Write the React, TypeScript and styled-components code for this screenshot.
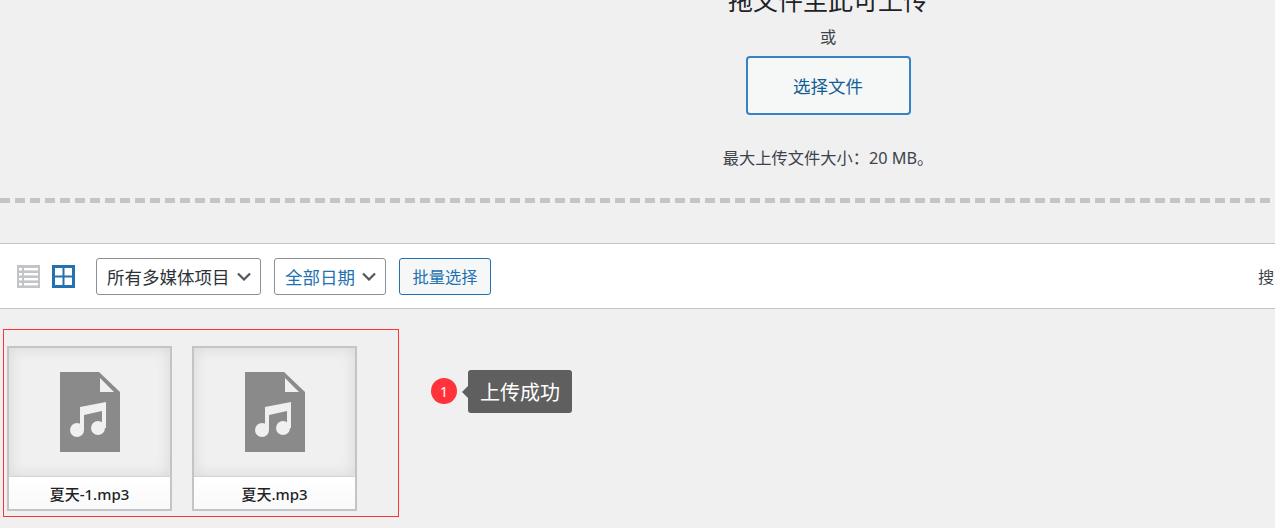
import React from 'react';
import styled, { createGlobalStyle } from 'styled-components';

const GlobalStyle = createGlobalStyle`
  html, body {
    margin: 0;
    padding: 0;
    background: #f0f0f1;
  }
  body {
    font-family: "Noto Sans", "Noto Sans CJK SC", sans-serif;
    color: #3c434a;
  }
`;

const Page = styled.div`
  width: 1275px;
  height: 528px;
  overflow: hidden;
`;

// Upload area
const Uploader = styled.section`
  height: 198px;
  padding-left: 381px;
  display: flex;
  flex-direction: column;
  align-items: center;
`;

const DropTitle = styled.h2`
  margin: -17px 0 0;
  font-size: 25px;
  line-height: 34px;
  font-weight: 400;
  color: #1d2327;
`;

const OrText = styled.p`
  margin: 8px 0 0;
  font-size: 16.25px;
  line-height: 24px;
`;

const PickButton = styled.button`
  width: 165px;
  height: 59px;
  margin-top: 7px;
  padding: 0;
  box-sizing: border-box;
  border: 2px solid #3582c4;
  border-radius: 4px;
  background: #f6f7f7;
  color: #135e96;
  font-family: inherit;
  font-size: 17.5px;
`;

const MaxSize = styled.p`
  margin: 31px 0 0;
  font-size: 16.25px;
  line-height: 24px;
`;

const DashedRule = styled.div`
  height: 5px;
  background: repeating-linear-gradient(to right, #c3c4c7 0 10px, transparent 10px 15px);
`;

// Toolbar
const Toolbar = styled.div`
  margin-top: 40px;
  height: 64px;
  display: flex;
  align-items: center;
  background: #fff;
  border-top: 1px solid #c3c4c7;
  border-bottom: 1px solid #c3c4c7;
  padding-left: 17px;
  white-space: nowrap;
`;

const ViewIcons = styled.div`
  display: flex;
  gap: 12px;
  margin-right: 21px;
`;

const SelectBox = styled.div<{ $width: number; $active?: boolean }>`
  width: ${p => p.$width}px;
  height: 37px;
  box-sizing: border-box;
  margin-right: 13px;
  padding: 0 9px 0 10px;
  display: flex;
  align-items: center;
  justify-content: space-between;
  background: #fff;
  border: 1px solid #8c8f94;
  border-radius: 3px;
  font-size: 17.5px;
  color: ${p => (p.$active ? '#2271b1' : '#2c3338')};
`;

const BulkButton = styled.button`
  width: 92px;
  height: 37px;
  padding: 0;
  box-sizing: border-box;
  border: 1px solid #2271b1;
  border-radius: 3px;
  background: #f6f7f7;
  color: #2271b1;
  font-family: inherit;
  font-size: 16.25px;
`;

const SearchLabel = styled.span`
  margin-left: auto;
  width: 17px;
  overflow: hidden;
  font-size: 16.25px;
  color: #3c434a;
`;

// Attachments row
const Content = styled.div`
  display: flex;
  align-items: center;
  padding: 20px 0 0 3px;
`;

const RedFrame = styled.div`
  width: 396px;
  height: 188px;
  box-sizing: border-box;
  padding: 16px 3px;
  display: flex;
  gap: 20px;
  border: 1px solid #f33;
`;

const Attachment = styled.div`
  width: 165px;
  height: 165px;
  box-sizing: border-box;
  border: 2px solid #c3c4c7;
  display: flex;
  flex-direction: column;
`;

const Thumb = styled.div`
  flex: 1;
  display: flex;
  align-items: center;
  justify-content: center;
  background: #f0f0f1;
  box-shadow: inset 0 0 15px rgba(0, 0, 0, 0.1);
`;

const FileName = styled.div`
  height: 33px;
  box-sizing: border-box;
  display: flex;
  align-items: center;
  justify-content: center;
  background: linear-gradient(#fff, #f9f9f9);
  border-top: 1px solid #d4d4d4;
  font-size: 15px;
  font-weight: 500;
  color: #1d2327;
`;

const Notice = styled.div`
  display: flex;
  align-items: center;
  gap: 11px;
  margin: 0 0 64px 32px;
`;

const StepBadge = styled.span`
  width: 26px;
  height: 26px;
  border-radius: 50%;
  background: #ff3339;
  color: #fff;
  font-size: 14px;
  display: flex;
  align-items: center;
  justify-content: center;
`;

const Tip = styled.div`
  position: relative;
  width: 104px;
  height: 43px;
  display: flex;
  align-items: center;
  justify-content: center;
  background: #5f5f5f;
  border-radius: 3px;
  color: #fff;
  font-size: 20px;

  &::before {
    content: '';
    position: absolute;
    left: -6px;
    top: 16px;
    border-style: solid;
    border-width: 6px 6px 6px 0;
    border-color: transparent #5f5f5f transparent transparent;
  }
`;

const ListViewIcon = () => (
  <svg width="23" height="23" viewBox="0 0 23 23">
    <rect width="23" height="23" fill="#c3c4c7" />
    <g fill="#fff">
      <rect x="2" y="3" width="3" height="2.4" />
      <rect x="7" y="3" width="14" height="2.4" />
      <rect x="2" y="8" width="3" height="2.4" />
      <rect x="7" y="8" width="14" height="2.4" />
      <rect x="2" y="13" width="3" height="2.4" />
      <rect x="7" y="13" width="14" height="2.4" />
      <rect x="2" y="18" width="3" height="2.4" />
      <rect x="7" y="18" width="14" height="2.4" />
    </g>
  </svg>
);

const GridViewIcon = () => (
  <svg width="23" height="23" viewBox="0 0 23 23">
    <rect width="23" height="23" fill="#2271b1" />
    <g fill="#fff">
      <rect x="3" y="3" width="7.5" height="7.5" />
      <rect x="12.5" y="3" width="7.5" height="7.5" />
      <rect x="3" y="12.5" width="7.5" height="7.5" />
      <rect x="12.5" y="12.5" width="7.5" height="7.5" />
    </g>
  </svg>
);

const Chevron = () => (
  <svg width="14" height="9" viewBox="0 0 14 9">
    <path d="M1 1.5 L7 7.5 L13 1.5" fill="none" stroke="#50575e" strokeWidth="2.2" />
  </svg>
);

const AudioIcon = () => (
  <svg width="60" height="80" viewBox="0 0 60 80">
    <path d="M0 0 H39 L60 20 V80 H0 Z" fill="#8a8a8a" />
    <path d="M40 6 L54 20 H40 Z" fill="#f0f0f1" />
    <g fill="#f0f0f1">
      <circle cx="17" cy="58" r="7" />
      <circle cx="38" cy="56" r="7" />
      <path d="M20 58 V35 L46 30 V56 H42 V39 L24 43 V58 Z" />
    </g>
  </svg>
);

const files = ['夏天-1.mp3', '夏天.mp3'];

export default function App() {
  return (
    <Page>
      <GlobalStyle />
      <Uploader>
        <DropTitle>拖文件至此可上传</DropTitle>
        <OrText>或</OrText>
        <PickButton>选择文件</PickButton>
        <MaxSize>最大上传文件大小：20 MB。</MaxSize>
      </Uploader>
      <DashedRule />
      <Toolbar>
        <ViewIcons>
          <ListViewIcon />
          <GridViewIcon />
        </ViewIcons>
        <SelectBox $width={165}>
          所有多媒体项目
          <Chevron />
        </SelectBox>
        <SelectBox $width={112} $active>
          全部日期
          <Chevron />
        </SelectBox>
        <BulkButton>批量选择</BulkButton>
        <SearchLabel>搜索</SearchLabel>
      </Toolbar>
      <Content>
        <RedFrame>
          {files.map(name => (
            <Attachment key={name}>
              <Thumb>
                <AudioIcon />
              </Thumb>
              <FileName>{name}</FileName>
            </Attachment>
          ))}
        </RedFrame>
        <Notice>
          <StepBadge>1</StepBadge>
          <Tip>上传成功</Tip>
        </Notice>
      </Content>
    </Page>
  );
}
